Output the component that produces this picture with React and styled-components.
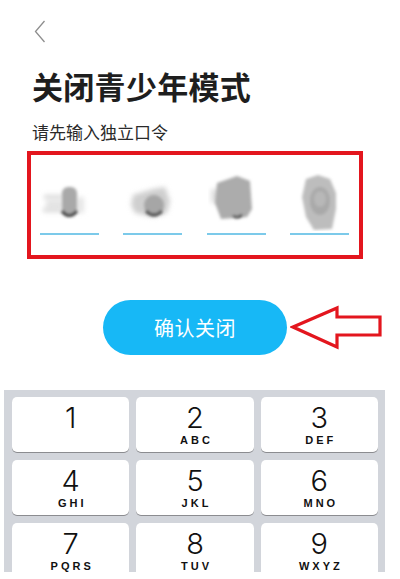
import React from "react";
import styled, { createGlobalStyle } from "styled-components";

const Global = createGlobalStyle`
  html, body { margin: 0; padding: 0; background: #ffffff; }
  body { font-family: "Noto Sans CJK SC", "Noto Sans", sans-serif; }
  * { box-sizing: border-box; }
`;

const Page = styled.div`
  width: 390px;
  height: 579px;
  display: flex;
  flex-direction: column;
  overflow: hidden;
`;

const Header = styled.div`
  height: 50px;
  padding: 20px 0 0 34px;
`;

const Content = styled.div`
  padding-left: 32px;
  display: flex;
  flex-direction: column;
`;

const Title = styled.h1`
  margin: 18px 0 0 0;
  font-size: 31px;
  line-height: 36px;
  font-weight: 700;
  color: #1e1e1e;
  letter-spacing: 0.3px;
`;

const Subtitle = styled.p`
  margin: 17px 0 0 0;
  font-size: 17px;
  line-height: 22px;
  color: #2a2a2a;
`;

const CodeBox = styled.div`
  margin: 8px 0 0 -5px;
  width: 336px;
  height: 108px;
  border: 4px solid #e3161e;
  display: flex;
  justify-content: space-between;
  align-items: flex-end;
  padding: 0 10px 20px 9px;
`;

const Cell = styled.div`
  width: 59px;
  display: flex;
  flex-direction: column;
`;

const Blur = styled.svg`
  display: block;
  width: 59px;
  height: 58px;
`;

const Line = styled.div`
  margin-top: 2px;
  height: 2px;
  background: #7ccaea;
`;

const ButtonRow = styled.div`
  position: relative;
  margin-top: 41px;
  display: flex;
  justify-content: center;
`;

const Confirm = styled.button`
  width: 184px;
  height: 55px;
  border: none;
  border-radius: 28px;
  background: #17b8f6;
  color: #ffffff;
  font-family: "Noto Sans CJK SC", sans-serif;
  font-size: 20px;
  letter-spacing: 0.5px;
`;

const Arrow = styled.svg`
  position: absolute;
  left: 290px;
  top: 4px;
  width: 94px;
  height: 46px;
`;

const ForgetClip = styled.div`
  margin-top: 31px;
  height: 4px;
  overflow: hidden;
  text-align: center;
`;

const Forget = styled.span`
  font-size: 16px;
  line-height: 16px;
  color: #8d8d8d;
  display: inline-block;
  margin-left: -4px;
`;

const Keyboard = styled.div`
  margin-left: 4px;
  width: 381px;
  height: 182px;
  overflow: hidden;
  background: #d2d5db;
  padding: 7px 7px 0 8px;
  display: grid;
  grid-template-columns: repeat(3, 1fr);
  grid-auto-rows: 55px;
  gap: 8px 7px;
`;

const Key = styled.div`
  background: #ffffff;
  border-radius: 5px;
  box-shadow: 0 1px 0 #8b8c90;
  display: flex;
  flex-direction: column;
  align-items: center;
  padding-top: 6px;
`;

const Digit = styled.span`
  font-family: Inter, "Liberation Sans", sans-serif;
  font-weight: 300;
  font-size: 29px;
  line-height: 29px;
  color: #111;
`;

const Letters = styled.span`
  margin-top: 3px;
  font-family: "Liberation Sans", Arial, sans-serif;
  font-weight: 700;
  font-size: 11px;
  line-height: 11px;
  letter-spacing: 3px;
  padding-left: 3px;
  color: #111;
  height: 11px;
`;

const keys = [
  ["1", ""], ["2", "ABC"], ["3", "DEF"],
  ["4", "GHI"], ["5", "JKL"], ["6", "MNO"],
  ["7", "PQRS"], ["8", "TUV"], ["9", "WXYZ"],
];

function Shape({ i }) {
  const id = `b${i}`;
  return (
    <Blur viewBox="0 0 59 58">
      <defs>
        <filter id={id} x="-30%" y="-30%" width="160%" height="160%">
          <feGaussianBlur stdDeviation="1.4" />
        </filter>
        <filter id={id + "s"} x="-30%" y="-30%" width="160%" height="160%">
          <feGaussianBlur stdDeviation="2.5" />
        </filter>
      </defs>
      {i === 0 && (
        <g>
          <g filter={`url(#${id}s)`} fill="#d6d6d6">
            <rect x="4" y="22" width="20" height="4" />
            <rect x="6" y="29" width="18" height="4" />
            <rect x="3" y="35" width="20" height="4" />
            <rect x="36" y="24" width="8" height="16" fill="#e6e6e6" />
          </g>
          <g filter={`url(#${id})`}>
            <rect x="22" y="14" width="15" height="30" rx="6" fill="#a9a9a9" />
            <path d="M22 38 Q29 47 37 38" stroke="#333" strokeWidth="3" fill="none" />
          </g>
        </g>
      )}
      {i === 1 && (
        <g>
          <g filter={`url(#${id}s)`} fill="#cfcfcf">
            <path d="M10 22 L30 16 L42 14 L47 28 L44 40 L30 44 L12 40 L8 32 Z" />
          </g>
          <g filter={`url(#${id})`}>
            <circle cx="31" cy="32" r="10" fill="#a6a6a6" />
            <path d="M23 38 Q31 46 39 38" stroke="#3a3a3a" strokeWidth="2.6" fill="none" />
          </g>
        </g>
      )}
      {i === 2 && (
        <g>
          <g filter={`url(#${id}s)`} fill="#dedede">
            <rect x="4" y="16" width="10" height="14" />
          </g>
          <g filter={`url(#${id})`}>
            <path d="M10 10 L30 3 L43 8 L45 36 L40 44 L14 46 L8 30 Z" fill="#acacac" />
            <path d="M26 43 Q31 46 35 42" stroke="#2e2e2e" strokeWidth="2.6" fill="none" />
          </g>
        </g>
      )}
      {i === 3 && (
        <g>
          <g filter={`url(#${id})`}>
            <path d="M16 6 L28 2 L40 6 L46 20 L46 36 L42 56 L24 57 L16 44 L12 24 Z" fill="#bdbdbd" />
            <ellipse cx="30" cy="28" rx="10" ry="14" fill="#a9a9a9" />
            <ellipse cx="30" cy="26" rx="6" ry="8" fill="#b8b8b8" />
          </g>
        </g>
      )}
    </Blur>
  );
}

export default function App() {
  return (
    <>
      <Global />
      <Page>
        <Header>
          <svg width="12" height="23" viewBox="0 0 12 23">
            <path d="M10.5 1 L1.5 11.5 L10.5 22" stroke="#8e8e8e" strokeWidth="1.3" fill="none" />
          </svg>
        </Header>
        <Content>
          <Title>关闭青少年模式</Title>
          <Subtitle>请先输入独立口令</Subtitle>
          <CodeBox>
            {[0, 1, 2, 3].map((i) => (
              <Cell key={i}>
                <Shape i={i} />
                <Line />
              </Cell>
            ))}
          </CodeBox>
        </Content>
        <ButtonRow>
          <Confirm>确认关闭</Confirm>
          <Arrow viewBox="0 0 94 46">
            <polygon
              points="3,23 47,4 47,13 90,13 90,31 47,31 47,43"
              fill="#ffffff"
              stroke="#e3161e"
              strokeWidth="3.2"
              strokeLinejoin="miter"
            />
          </Arrow>
        </ButtonRow>
        <ForgetClip>
          <Forget>忘记口令</Forget>
        </ForgetClip>
        <Keyboard>
          {keys.map(([d, l]) => (
            <Key key={d}>
              <Digit>{d}</Digit>
              <Letters>{l}</Letters>
            </Key>
          ))}
        </Keyboard>
      </Page>
    </>
  );
}
